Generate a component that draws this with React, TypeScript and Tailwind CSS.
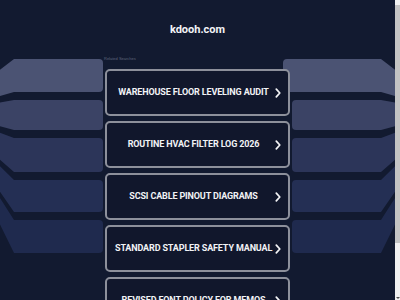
const bands = [
  { t: 59, b: 92, fill: "#4b5373" },
  { t: 100, b: 130, fill: "#3b4365" },
  { t: 138, b: 172, fill: "#2c3559" },
  { t: 180, b: 212, fill: "#242f54" },
  { t: 220, b: 253, fill: "#1f2a4e" },
];

const searches = [
  "WAREHOUSE FLOOR LEVELING AUDIT",
  "ROUTINE HVAC FILTER LOG 2026",
  "SCSI CABLE PINOUT DIAGRAMS",
  "STANDARD STAPLER SAFETY MANUAL",
  "REVISED FONT POLICY FOR MEMOS",
];

// outer ends of the slabs bend towards a point off-screen
const fan = (y: number) => 112 + ((y - 112) * 55) / 69;

function leftSlab(t: number, b: number) {
  const x = 103;
  const r = 4;
  return `M ${x - r} ${t} Q ${x} ${t} ${x} ${t + r} L ${x} ${b - r} Q ${x} ${b} ${x - r} ${b} L 14 ${b} L 0 ${fan(b)} L 0 ${fan(t)} L 14 ${t} Z`;
}

function rightSlab(t: number, b: number, x: number) {
  const r = 4;
  return `M ${x + r} ${t} Q ${x} ${t} ${x} ${t + r} L ${x} ${b - r} Q ${x} ${b} ${x + r} ${b} L 381 ${b} L 395 ${fan(b)} L 395 ${fan(t)} L 381 ${t} Z`;
}

function Backdrop() {
  return (
    <svg
      className="absolute inset-0"
      width="395"
      height="300"
      viewBox="0 0 395 300"
    >
      {bands.map((band, i) => (
        <g key={i} fill={band.fill}>
          <path d={leftSlab(band.t, band.b)} />
          <path d={rightSlab(band.t, band.b, i === 0 ? 283 : 292)} />
        </g>
      ))}
    </svg>
  );
}

function Chevron() {
  return (
    <svg
      className="w-[6px] h-[10px] ml-[3px] shrink-0"
      viewBox="0 0 6 10"
      fill="none"
      stroke="#f4f4f6"
      strokeWidth="1.7"
      strokeLinecap="round"
      strokeLinejoin="round"
    >
      <polyline points="1.3 1.2 4.8 5 1.3 8.8" />
    </svg>
  );
}

export default function App() {
  return (
    <div className="flex w-[400px] h-[300px] overflow-hidden bg-[#121a30] font-['Roboto',sans-serif]">
      <div className="relative flex-1">
        <Backdrop />
        <div className="relative flex flex-col items-center">
          <h1 className="mt-[23px] h-[14px] leading-[14px] text-[11px] font-bold text-[#f2f3f6]">
            kdooh.com
          </h1>
          <div className="w-[185px] mt-[19px]">
            <p className="ml-[-1px] h-[6px] leading-[6px] text-[4px] text-[#5f667c] font-['Liberation_Sans',sans-serif]">
              Related Searches
            </p>
            <ul className="mt-[7px] flex flex-col gap-[5px]">
              {searches.map((s) => (
                <li
                  key={s}
                  className="flex items-center h-[47px] shrink-0 pl-[8px] pr-[7px] rounded-[5px] border-2 border-[#8d909b] bg-[#11172c]"
                >
                  <span className="flex-1 text-center text-[9px] leading-none font-bold tracking-[-0.14px] text-[#f2f3f6] whitespace-nowrap">
                    {s}
                  </span>
                  <Chevron />
                </li>
              ))}
            </ul>
          </div>
        </div>
      </div>
      <div className="flex flex-col w-[5px] bg-[#f1f1f1]">
        <div className="mt-[5px] h-[238px] bg-[#c4c4c4]" />
        <div className="mt-auto mb-[1px] mx-auto w-0 h-0 border-l-[2px] border-r-[2px] border-t-[2px] border-l-transparent border-r-transparent border-t-[#505050]" />
      </div>
    </div>
  );
}
